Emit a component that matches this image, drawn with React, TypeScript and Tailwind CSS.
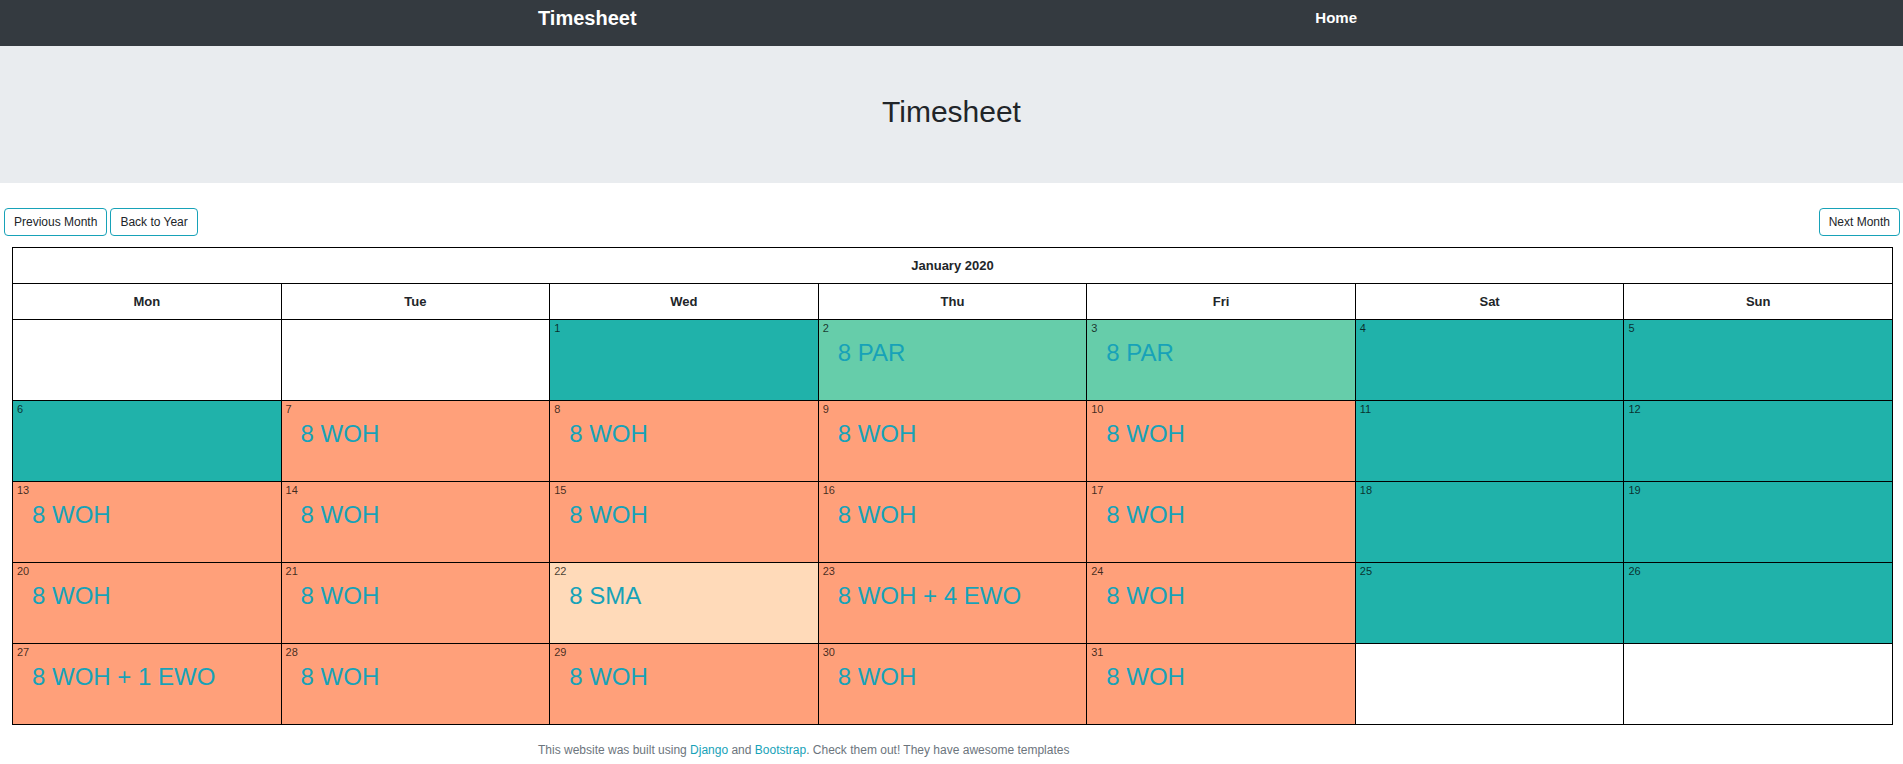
import React from "react";

type Day = { n?: number; bg?: string; text?: string };

const TEAL = "bg-[#20b2aa]";
const WORK = "bg-[#ffa07a]";
const PAR = "bg-[#66cdaa]";
const SICK = "bg-[#ffdab9]";

const weeks: Day[][] = [
  [
    {},
    {},
    { n: 1, bg: TEAL },
    { n: 2, bg: PAR, text: "8 PAR" },
    { n: 3, bg: PAR, text: "8 PAR" },
    { n: 4, bg: TEAL },
    { n: 5, bg: TEAL },
  ],
  [
    { n: 6, bg: TEAL },
    { n: 7, bg: WORK, text: "8 WOH" },
    { n: 8, bg: WORK, text: "8 WOH" },
    { n: 9, bg: WORK, text: "8 WOH" },
    { n: 10, bg: WORK, text: "8 WOH" },
    { n: 11, bg: TEAL },
    { n: 12, bg: TEAL },
  ],
  [
    { n: 13, bg: WORK, text: "8 WOH" },
    { n: 14, bg: WORK, text: "8 WOH" },
    { n: 15, bg: WORK, text: "8 WOH" },
    { n: 16, bg: WORK, text: "8 WOH" },
    { n: 17, bg: WORK, text: "8 WOH" },
    { n: 18, bg: TEAL },
    { n: 19, bg: TEAL },
  ],
  [
    { n: 20, bg: WORK, text: "8 WOH" },
    { n: 21, bg: WORK, text: "8 WOH" },
    { n: 22, bg: SICK, text: "8 SMA" },
    { n: 23, bg: WORK, text: "8 WOH + 4 EWO" },
    { n: 24, bg: WORK, text: "8 WOH" },
    { n: 25, bg: TEAL },
    { n: 26, bg: TEAL },
  ],
  [
    { n: 27, bg: WORK, text: "8 WOH + 1 EWO" },
    { n: 28, bg: WORK, text: "8 WOH" },
    { n: 29, bg: WORK, text: "8 WOH" },
    { n: 30, bg: WORK, text: "8 WOH" },
    { n: 31, bg: WORK, text: "8 WOH" },
    {},
    {},
  ],
];

const dayNames = ["Mon", "Tue", "Wed", "Thu", "Fri", "Sat", "Sun"];

function NavButton({ label }: { label: string }) {
  return (
    <button className="h-[28px] px-[9px] border border-[#17a2b8] rounded-[4px] bg-white text-[12px] leading-[18px] text-[#212529]">
      {label}
    </button>
  );
}

export default function App() {
  return (
    <div className="min-h-[764px] bg-white text-[#212529] font-['Liberation_Sans',Arial,sans-serif]">
      {/* navbar */}
      <nav className="h-[46px] bg-[#343a40]">
        <div className="w-[827px] mx-auto flex justify-between items-start pt-[3px]">
          <span className="text-[20px] leading-[30px] font-bold text-white">Timesheet</span>
          <span className="text-[15px] leading-[30px] font-bold text-white pr-2">Home</span>
        </div>
      </nav>

      {/* jumbotron */}
      <div className="h-[137px] bg-[#e9ecef] pt-[48px] text-center">
        <h1 className="text-[30px] leading-[36px] text-[#212529]">Timesheet</h1>
      </div>

      {/* month controls */}
      <div className="flex justify-between pl-[4px] pr-[3px] mt-[25px]">
        <div className="flex gap-[3px]">
          <NavButton label="Previous Month" />
          <NavButton label="Back to Year" />
        </div>
        <NavButton label="Next Month" />
      </div>

      {/* calendar */}
      <div className="ml-[12px] w-[1881px] mt-[11px]">
        <table className="w-full table-fixed border-collapse border border-black">
          <thead>
            <tr className="h-[36px]">
              <th colSpan={7} className="border border-black text-[13px] leading-[19px] font-bold text-center">
                January 2020
              </th>
            </tr>
            <tr className="h-[36px]">
              {dayNames.map((d) => (
                <th key={d} className="border border-black text-[13px] leading-[19px] font-bold text-center">
                  {d}
                </th>
              ))}
            </tr>
          </thead>
          <tbody>
            {weeks.map((week, wi) => (
              <tr key={wi} className="h-[81px]">
                {week.map((day, di) => (
                  <td
                    key={di}
                    className={`border border-black align-top p-0 ${day.bg ?? "bg-white"}`}
                  >
                    {day.n !== undefined && (
                      <div className="pl-[4px] pt-[2px] text-[11px] leading-[13px] text-black/75">{day.n}</div>
                    )}
                    {day.text && (
                      <div className="pl-[19px] text-[24px] leading-[36px] text-[#17a2b8]">{day.text}</div>
                    )}
                  </td>
                ))}
              </tr>
            ))}
          </tbody>
        </table>
      </div>

      {/* footer */}
      <footer className="w-[827px] mx-auto mt-4 text-[12px] leading-[18px] text-[#6c757d]">
        This website was built using <a className="text-[#17a2b8]">Django</a> and{" "}
        <a className="text-[#17a2b8]">Bootstrap</a>. Check them out! They have awesome templates
      </footer>
    </div>
  );
}
